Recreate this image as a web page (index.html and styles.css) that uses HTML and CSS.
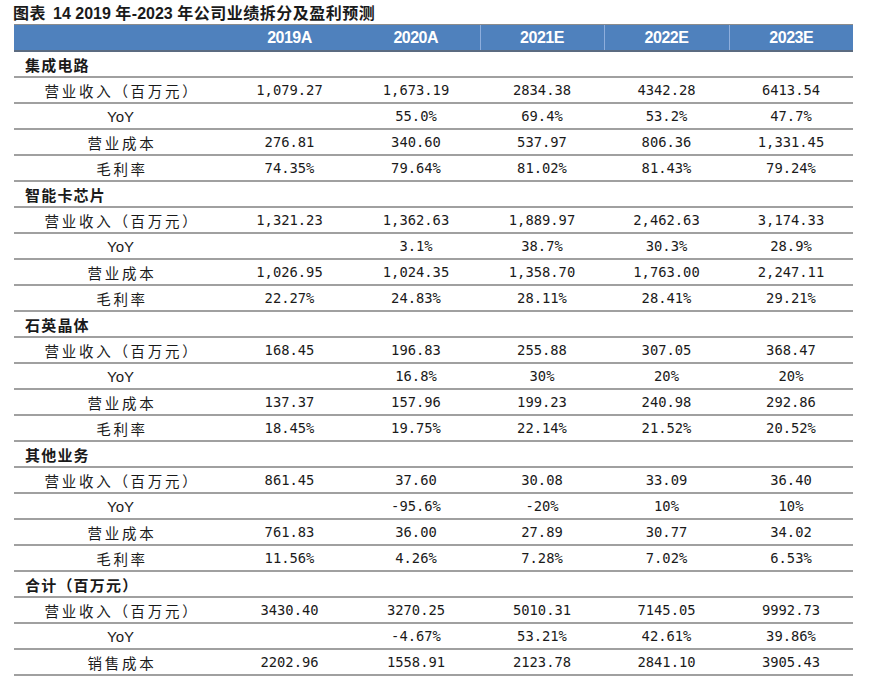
FILE: index.html
```html
<!DOCTYPE html>
<html lang="zh-CN">
<head>
<meta charset="utf-8">
<title>公司业绩拆分及盈利预测</title>
<link rel="stylesheet" href="styles.css">
</head>
<body>
<div class="title"><span class="cjk">图表</span><span class="lat num-title">14 2019 </span><span class="cjk">年</span><span class="lat">-2023 </span><span class="cjk">年公司业绩拆分及盈利预测</span></div>
<table class="fin">
  <colgroup>
    <col class="c-label"><col class="c-a1"><col class="c-a2"><col class="c-e1"><col class="c-e2"><col class="c-e3">
  </colgroup>
  <thead>
    <tr><th></th><th>2019A</th><th>2020A</th><th class="sep">2021E</th><th class="sep">2022E</th><th class="sep">2023E</th></tr>
  </thead>
  <tbody>
    <tr class="cat"><td colspan="6">集成电路</td></tr>
    <tr><td class="lbl">营业收入（百万元）</td><td>1,079.27</td><td>1,673.19</td><td>2834.38</td><td>4342.28</td><td>6413.54</td></tr>
    <tr><td class="lbl yoy">YoY</td><td></td><td>55.0%</td><td>69.4%</td><td>53.2%</td><td>47.7%</td></tr>
    <tr><td class="lbl">营业成本</td><td>276.81</td><td>340.60</td><td>537.97</td><td>806.36</td><td>1,331.45</td></tr>
    <tr><td class="lbl">毛利率</td><td>74.35%</td><td>79.64%</td><td>81.02%</td><td>81.43%</td><td>79.24%</td></tr>

    <tr class="cat"><td colspan="6">智能卡芯片</td></tr>
    <tr><td class="lbl">营业收入（百万元）</td><td>1,321.23</td><td>1,362.63</td><td>1,889.97</td><td>2,462.63</td><td>3,174.33</td></tr>
    <tr><td class="lbl yoy">YoY</td><td></td><td>3.1%</td><td>38.7%</td><td>30.3%</td><td>28.9%</td></tr>
    <tr><td class="lbl">营业成本</td><td>1,026.95</td><td>1,024.35</td><td>1,358.70</td><td>1,763.00</td><td>2,247.11</td></tr>
    <tr><td class="lbl">毛利率</td><td>22.27%</td><td>24.83%</td><td>28.11%</td><td>28.41%</td><td>29.21%</td></tr>

    <tr class="cat"><td colspan="6">石英晶体</td></tr>
    <tr><td class="lbl">营业收入（百万元）</td><td>168.45</td><td>196.83</td><td>255.88</td><td>307.05</td><td>368.47</td></tr>
    <tr><td class="lbl yoy">YoY</td><td></td><td>16.8%</td><td>30%</td><td>20%</td><td>20%</td></tr>
    <tr><td class="lbl">营业成本</td><td>137.37</td><td>157.96</td><td>199.23</td><td>240.98</td><td>292.86</td></tr>
    <tr><td class="lbl">毛利率</td><td>18.45%</td><td>19.75%</td><td>22.14%</td><td>21.52%</td><td>20.52%</td></tr>

    <tr class="cat"><td colspan="6">其他业务</td></tr>
    <tr><td class="lbl">营业收入（百万元）</td><td>861.45</td><td>37.60</td><td>30.08</td><td>33.09</td><td>36.40</td></tr>
    <tr><td class="lbl yoy">YoY</td><td></td><td>-95.6%</td><td>-20%</td><td>10%</td><td>10%</td></tr>
    <tr><td class="lbl">营业成本</td><td>761.83</td><td>36.00</td><td>27.89</td><td>30.77</td><td>34.02</td></tr>
    <tr><td class="lbl">毛利率</td><td>11.56%</td><td>4.26%</td><td>7.28%</td><td>7.02%</td><td>6.53%</td></tr>

    <tr class="cat"><td colspan="6">合计（百万元）</td></tr>
    <tr><td class="lbl">营业收入（百万元）</td><td>3430.40</td><td>3270.25</td><td>5010.31</td><td>7145.05</td><td>9992.73</td></tr>
    <tr><td class="lbl yoy">YoY</td><td></td><td>-4.67%</td><td>53.21%</td><td>42.61%</td><td>39.86%</td></tr>
    <tr><td class="lbl">销售成本</td><td>2202.96</td><td>1558.91</td><td>2123.78</td><td>2841.10</td><td>3905.43</td></tr>
  </tbody>
</table>
</body>
</html>
```

FILE: styles.css
```css
html, body {
  margin: 0;
  padding: 0;
  background: #ffffff;
}

body {
  color: #1a1a1a;
  font-family: "Liberation Sans", "Noto Sans CJK SC", sans-serif;
}

.title {
  height: 24px;
  line-height: 24px;
  padding-left: 13px;
  font-size: 16px;
  font-weight: bold;
  color: #1a1a1a;
  white-space: nowrap;
}

.title .cjk {
  font-family: "Noto Sans CJK SC", sans-serif;
  letter-spacing: 0.5px;
}

.title .lat {
  font-family: "Liberation Sans", sans-serif;
}

.title .num-title {
  margin-left: 7px;
}

.fin {
  margin-left: 14px;
  width: 839px;
  border-collapse: collapse;
  table-layout: fixed;
}

.c-label { width: 213px; }
.c-a1 { width: 125px; }
.c-a2 { width: 128px; }
.c-e1 { width: 124px; }
.c-e2 { width: 125px; }
.c-e3 { width: 124px; }

.fin th {
  height: 25px;
  padding: 0;
  background: #4f81bd;
  color: #ffffff;
  font-family: "Liberation Sans", sans-serif;
  font-size: 16px;
  font-weight: bold;
  letter-spacing: -0.5px;
  text-align: center;
  border-top: 1px solid #8c8c8c;
  border-bottom: 2px solid #5b6b80;
}

.fin th.sep {
  border-left: 1px solid #8eaedc;
}

.fin td {
  height: 24px;
  padding: 0;
  text-align: center;
  font-family: "DejaVu Sans Mono", "Noto Sans CJK SC", monospace;
  font-size: 13.8px;
  color: #1a1a1a;
  border-bottom: 2px solid #a0a0a0;
  white-space: nowrap;
}

.fin td.lbl {
  font-family: "Noto Sans CJK SC", sans-serif;
  font-size: 14.5px;
  letter-spacing: 2.7px;
  padding-left: 3px;
}

.fin td.yoy {
  font-family: "Liberation Sans", sans-serif;
  font-size: 15px;
  letter-spacing: 0;
  padding-left: 0;
}

.fin tr.cat td {
  text-align: left;
  padding-left: 11px;
  font-family: "Noto Sans CJK SC", sans-serif;
  font-size: 15px;
  font-weight: bold;
  letter-spacing: 1.2px;
}
```
